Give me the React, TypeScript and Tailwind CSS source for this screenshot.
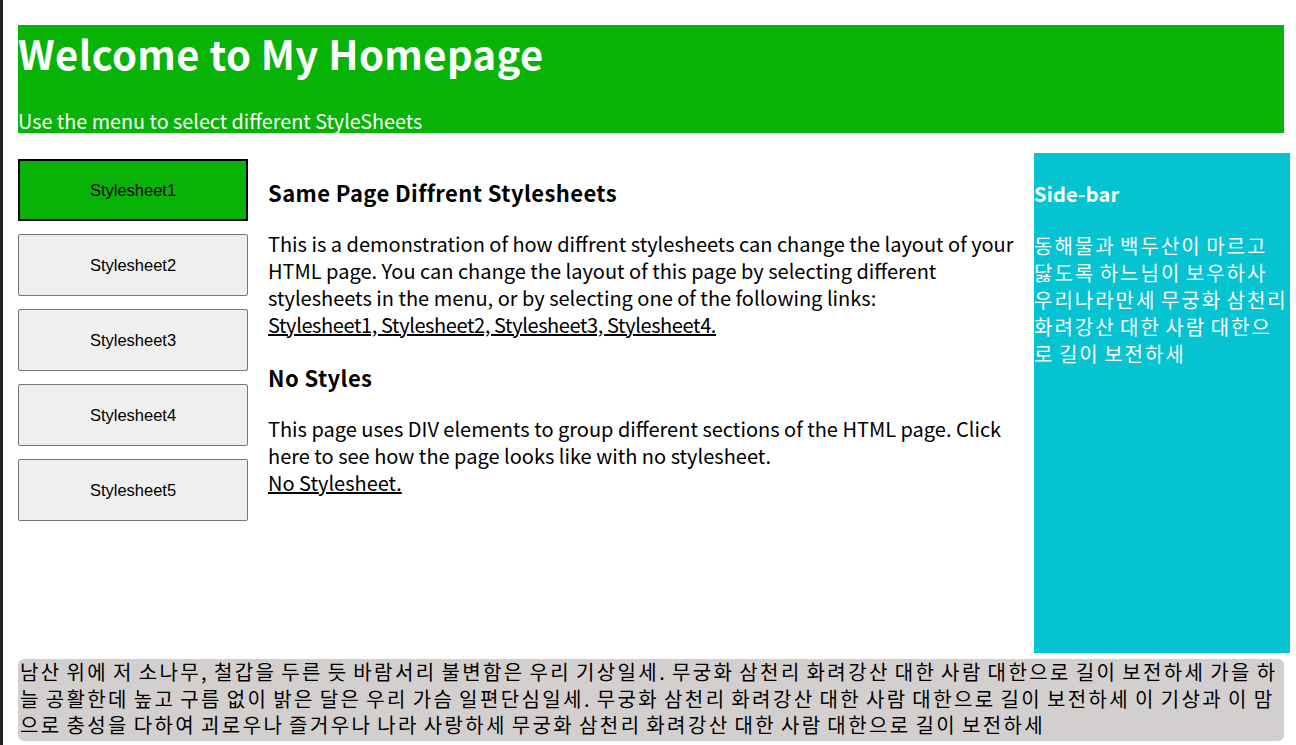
export default function App() {
  const font = { fontFamily: '"Noto Sans CJK KR", "Noto Sans", sans-serif' };
  const btn = "h-[62px] w-[230px] flex items-center justify-center text-[16.5px] text-black rounded-[2px]";
  return (
    <div className="min-h-[745px] w-[1296px] bg-white border-l-[3px] border-[#202020] pl-[15px] pt-[25px]" style={font}>
      <div className="w-[1266px] h-[108px] bg-[#06b306] text-white flex flex-col">
        <h1 className="text-[40px] font-bold leading-[56px] tracking-[0.4px]">Welcome to My Homepage</h1>
        <p className="text-[19.8px] leading-[24px] mt-auto">Use the menu to select different StyleSheets</p>
      </div>
      <div className="flex mt-[20px] h-[500px] w-[1272px]">
        <div className="flex flex-col gap-[13px] pt-[6px] w-[230px] shrink-0" style={{ fontFamily: '"Liberation Sans", Arial, sans-serif' }}>
          <div className={`${btn} bg-[#06b306] border-2 border-black rounded-none`}>Stylesheet1</div>
          <div className={`${btn} bg-[#efefef] border border-[#767676]`}>Stylesheet2</div>
          <div className={`${btn} bg-[#efefef] border border-[#767676]`}>Stylesheet3</div>
          <div className={`${btn} bg-[#efefef] border border-[#767676]`}>Stylesheet4</div>
          <div className={`${btn} bg-[#efefef] border border-[#767676]`}>Stylesheet5</div>
        </div>
        <div className="ml-[20px] w-[746px] shrink-0 text-black text-[20px] leading-[27px]">
          <h2 className="text-[22px] font-bold mt-[24px] leading-[30px] tracking-[0.4px]">Same Page Diffrent Stylesheets</h2>
          <p className="mt-[23px]">
            This is a demonstration of how diffrent stylesheets can change the layout of your HTML page. You can change the layout of this page by selecting different stylesheets in the menu, or by selecting one of the following links:
            <br />
            <span className="underline tracking-[-0.4px]">Stylesheet1, Stylesheet2, Stylesheet3, Stylesheet4.</span>
          </p>
          <h2 className="text-[22px] font-bold mt-[24px] leading-[30px] tracking-[0.4px]">No Styles</h2>
          <p className="mt-[23px]">
            This page uses DIV elements to group different sections of the HTML page. Click here to see how the page looks like with no stylesheet.
            <br />
            <span className="underline">No Stylesheet.</span>
          </p>
        </div>
        <div className="ml-[20px] w-[256px] shrink-0 h-[500px] bg-[#05c3d1] text-white text-[20px] leading-[27px]">
          <h3 className="font-bold mt-[27px] tracking-[0.2px]">Side-bar</h3>
          <p className="mt-[25px] tracking-[2px] [word-spacing:-2px]">동해물과 백두산이 마르고 닳도록 하느님이 보우하사 우리나라만세 무궁화 삼천리 화려강산 대한 사람 대한으로 길이 보전하세</p>
        </div>
      </div>
      <div className="mt-[6px] w-[1266px] bg-[#d3cfcf] rounded-[6px] text-[20px] leading-[26.5px] text-black pb-[2px] pl-[2px] tracking-[2.4px] [word-spacing:-2px]">
        남산 위에 저 소나무, 철갑을 두른 듯 바람서리 불변함은 우리 기상일세. 무궁화 삼천리 화려강산 대한 사람 대한으로 길이 보전하세 가을 하늘 공활한데 높고 구름 없이 밝은 달은 우리 가슴 일편단심일세. 무궁화 삼천리 화려강산 대한 사람 대한으로 길이 보전하세 이 기상과 이 맘으로 충성을 다하여 괴로우나 즐거우나 나라 사랑하세 무궁화 삼천리 화려강산 대한 사람 대한으로 길이 보전하세
      </div>
    </div>
  );
}
